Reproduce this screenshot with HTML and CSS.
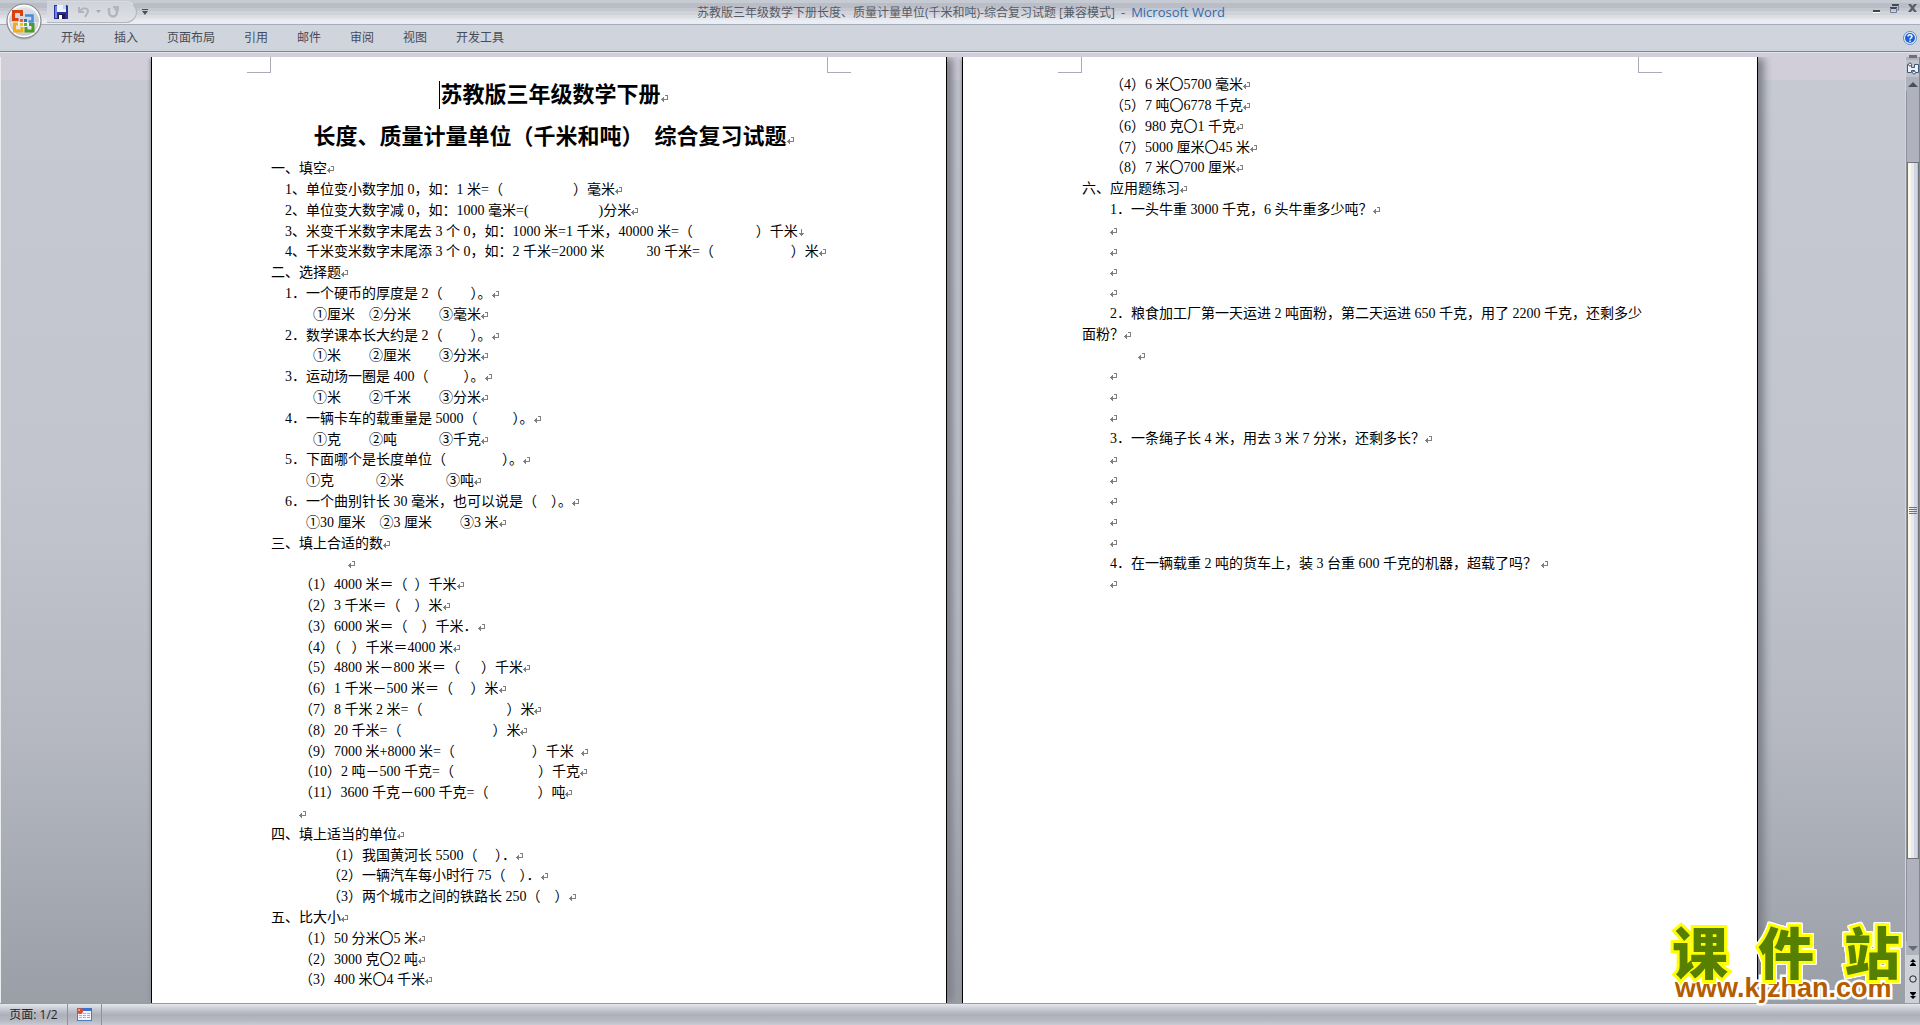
FILE: index.html
```html
<!DOCTYPE html>
<html lang="zh-CN">
<head>
<meta charset="utf-8">
<title>苏教版三年级数学下册 - Microsoft Word</title>
<link rel="stylesheet" href="styles.css">
</head>
<body>
<header class="titlebar">
  <button class="office" aria-label="Office 按钮">
    <svg width="40" height="40" viewBox="0 0 40 40">
      <defs>
        <radialGradient id="orb" cx="50%" cy="40%" r="60%"><stop offset="0" stop-color="#fff"/><stop offset=".6" stop-color="#e4e6ea"/><stop offset="1" stop-color="#b4b8c0"/></radialGradient>
        <linearGradient id="orbTop" x1="0" y1="0" x2="0" y2="1"><stop offset="0" stop-color="#d4d7dc"/><stop offset="1" stop-color="#c2c5cb"/></linearGradient>
      </defs>
      <circle cx="20" cy="20" r="17.500" fill="#8e9299" opacity=".5"/>
      <circle cx="20" cy="19" r="17" fill="url(#orb)" stroke="#7d8189"/>
      <circle cx="20" cy="19" r="15.500" fill="none" stroke="#fff" stroke-width="1.500"/>
      <path d="M5 20a15 14 0 0 1 30 0z" fill="url(#orbTop)" opacity=".7"/>
      <g fill="none" stroke-width="3">
        <path d="M18 9.500h-8.500v8h5M17.500 8v6" stroke="#d8420f"/>
        <path d="M21 13.500h7.500v6h-4" stroke="#3f8fdc" stroke-width="2.500"/>
        <path d="M14 22h-3.500v7h7.500V25" stroke="#f5ac14"/>
        <path d="M25 22.500h4v6.500h-7V25" stroke="#4c9a2a"/>
      </g>
      <path d="M16 17h3v3h-3z" fill="#e8661c"/><path d="M20 17h3v3h-3z" fill="#2a6fd0"/>
      <path d="M16 21h3v3h-3z" fill="#f2c21c"/><path d="M20 21h3v3h-3z" fill="#61ad35"/>
    </svg>
  </button>
  <div class="qat">
    <button aria-label="保存"><svg width="14" height="14" viewBox="0 0 14 14"><path d="M0 0h13l1 1v13H0z" fill="#2c2f9c"/><path d="M1 1h2v12H1z" fill="#6f86e6"/><path d="M3 0h9v7H3z" fill="#e9f2ff"/><path d="M9 0h3v4H9z" fill="#b4d4fa"/><path d="M4 9h7v5H4z" fill="#1b1c4c"/><path d="M5 10h3v4H5z" fill="#fff"/></svg></button>
    <button aria-label="撤消"><svg width="12" height="12" viewBox="0 0 12 12" fill="none" stroke="#b1b5bf" stroke-width="2"><path d="M1 1v5h5M2 5c3-4 8-3 8 0 0 2-2 4-3 6"/></svg></button>
    <button class="drop" aria-label="撤消选项"><svg width="5" height="4" viewBox="0 0 5 4"><path d="M0 0h5L2.500 3z" fill="#a6aab5"/></svg></button>
    <button aria-label="重复"><svg width="12" height="12" viewBox="0 0 12 12" fill="none" stroke="#b1b5bf" stroke-width="2.500"><path d="M2 2v4c0 6 8 6 8 0 0-2-1-3-2-4M6 1h5v4"/></svg></button>
  </div>
  <button class="customize" aria-label="自定义快速访问工具栏"><svg width="6" height="6" viewBox="0 0 6 6"><path d="M0 0h6v1H0zM0 2h6L3 6z" fill="#4b4f58"/></svg></button>
  <h1 class="caption">苏教版三年级数学下册长度、质量计量单位(千米和吨)-综合复习试题 [兼容模式]<span class="dash">-</span><span>Microsoft Word</span></h1>
  <div class="window-buttons">
    <button aria-label="最小化"><svg width="9" height="9" viewBox="0 0 9 9"><path d="M1 6h7v2H1z" fill="#3f434b"/><path d="M1 8h7v1H1z" fill="#fff"/></svg></button>
    <button aria-label="还原"><svg width="9" height="9" viewBox="0 0 9 9" fill="none"><path d="M2 1h7M0 4h7" stroke="#43474f" stroke-width="2"/><path d="M8.500 1v5H7M.500 4v4.500h6V4" stroke="#6f7f9a"/></svg></button>
    <button aria-label="关闭"><svg width="9" height="9" viewBox="0 0 9 9"><path d="M0 0h3l1.500 2L6 0h3L6 4l3 4H6L4.500 6 3 8H0l3-4z" fill="#59606d"/></svg></button>
  </div>
</header>

<nav class="tabs">
  <button>开始</button><button>插入</button><button>页面布局</button><button>引用</button><button>邮件</button><button>审阅</button><button>视图</button><button>开发工具</button>
  <button class="help" aria-label="帮助"><svg width="14" height="14" viewBox="0 0 14 14"><circle cx="7" cy="7" r="6.500" fill="#eaf3fd" stroke="#5d8fc4"/><circle cx="7" cy="7" r="5" fill="#1f5fd6"/><path d="M5 5.500c0-2.500 4-2.500 4 0C9 7 7 6.800 7 8.500M7 9.500v1.500" fill="none" stroke="#fff" stroke-width="1.500"/></svg></button>
</nav>

<div class="workspace">
  <main class="canvas">
    <article class="paper">
      <div class="crop"></div>
      <h2 class="heading"><i class="caret"></i>苏教版三年级数学下册</h2>
      <h2 class="heading">长度、质量计量单位（千米和吨）<span class="gap"></span>综合复习试题</h2>
      <div class="lines">
        <p>一、填空</p>
        <p class="in1">1、单位变小数字加 0，如：1 米=（　　　　　）毫米</p>
        <p class="in1">2、单位变大数字减 0，如：1000 毫米=(　　　　　)分米</p>
        <p class="in1 soft">3、米变千米数字末尾去 3 个 0，如：1000 米=1 千米，40000 米=（　　　　  ）千米</p>
        <p class="in1">4、千米变米数字末尾添 3 个 0，如：2 千米=2000 米　　　30 千米=（　　　　　  ）米</p>
        <p>二、选择题</p>
        <p class="in1">1．一个硬币的厚度是 2（　　）。</p>
        <p class="in3">①厘米　②分米　　③毫米</p>
        <p class="in1">2．数学课本长大约是 2（　　）。</p>
        <p class="in3">①米　　②厘米　　③分米</p>
        <p class="in1">3．运动场一圈是 400（　　  ）。</p>
        <p class="in3">①米　　②千米　　③分米</p>
        <p class="in1">4．一辆卡车的载重量是 5000（　　  ）。</p>
        <p class="in3">①克　　②吨　　　③千克</p>
        <p class="in1">5．下面哪个是长度单位（　　　　）。</p>
        <p class="in2-half">①克　　　②米　　　③吨</p>
        <p class="in1">6．一个曲别针长 30 毫米，也可以说是（　）。</p>
        <p class="in2-half">①30 厘米　②3 厘米　　③3 米</p>
        <p>三、填上合适的数</p>
        <p class="in5"></p>
        <p class="in2">（1）4000 米＝（  ）千米</p>
        <p class="in2">（2）3 千米＝（　）米</p>
        <p class="in2">（3）6000 米＝（　）千米．</p>
        <p class="in2">（4）（   ）千米＝4000 米</p>
        <p class="in2">（5）4800 米－800 米＝（　  ）千米</p>
        <p class="in2">（6）1 千米－500 米＝（　 ）米</p>
        <p class="in2">（7）8 千米 2 米=（　　　　　　）米</p>
        <p class="in2">（8）20 千米=（　　　　　　  ）米</p>
        <p class="in2">（9）7000 米+8000 米=（　　　　　  ）千米  </p>
        <p class="in2">（10）2 吨－500 千克=（　　　　　　）千克</p>
        <p class="in2">（11）3600 千克－600 千克=（　　　  ）吨</p>
        <p class="in2"></p>
        <p>四、填上适当的单位</p>
        <p class="in4">（1）我国黄河长 5500（　 ）．</p>
        <p class="in4">（2）一辆汽车每小时行 75（　）．</p>
        <p class="in4">（3）两个城市之间的铁路长 250（　）</p>
        <p>五、比大小</p>
        <p class="in2">（1）50 分米〇5 米</p>
        <p class="in2">（2）3000 克〇2 吨</p>
        <p class="in2">（3）400 米〇4 千米</p>
      </div>
    </article>
    <article class="paper">
      <div class="crop"></div>
      <div class="lines">
        <p class="in2">（4）6 米〇5700 毫米</p>
        <p class="in2">（5）7 吨〇6778 千克</p>
        <p class="in2">（6）980 克〇1 千克</p>
        <p class="in2">（7）5000 厘米〇45 米</p>
        <p class="in2">（8）7 米〇700 厘米</p>
        <p>六、应用题练习</p>
        <p class="in2">1．一头牛重 3000 千克，6 头牛重多少吨？</p>
        <p class="in2"></p>
        <p class="in2"></p>
        <p class="in2"></p>
        <p class="in2"></p>
        <p class="in2 wrap">2．粮食加工厂第一天运进 2 吨面粉，第二天运进 650 千克，用了 2200 千克，还剩多少</p>
        <p>面粉？</p>
        <p class="in4"></p>
        <p class="in2"></p>
        <p class="in2"></p>
        <p class="in2"></p>
        <p class="in2">3．一条绳子长 4 米，用去 3 米 7 分米，还剩多长？</p>
        <p class="in2"></p>
        <p class="in2"></p>
        <p class="in2"></p>
        <p class="in2"></p>
        <p class="in2"></p>
        <p class="in2">4．在一辆载重 2 吨的货车上，装 3 台重 600 千克的机器，超载了吗？ </p>
        <p class="in2"></p>
      </div>
    </article>
  </main>
  <aside class="scrollbar">
    <div class="split"></div>
    <button class="ruler" aria-label="标尺"><svg width="13" height="13" viewBox="0 0 13 13" fill="#f1eff6" stroke="#41597a"><path d="M1.500 2.500h4v3h3v-3h4v8h-4v-2h-3v2h-4z"/><circle cx="4" cy="2.500" r="1.500"/><circle cx="8" cy="10.500" r="1.500"/></svg></button>
    <button class="arrow" aria-label="向上滚动"><svg width="10" height="5" viewBox="0 0 10 5"><path d="M5 0l5 5H0z" fill="#4a505c"/></svg></button>
    <div class="track"><div class="thumb"><i></i><i></i><i></i><i></i></div></div>
    <button class="arrow" aria-label="向下滚动"><svg width="10" height="5" viewBox="0 0 10 5"><path d="M0 0h10L5 5z" fill="#656b76"/></svg></button>
    <div class="browse">
      <button aria-label="前一页"><svg width="6" height="7" viewBox="0 0 6 7"><path d="M3 0l3 3H0zM3 3l3 3H0zM0 6h6v1H0z"/></svg></button>
      <button aria-label="选择浏览对象"><svg width="8" height="8" viewBox="0 0 8 8"><circle cx="4" cy="4" r="3.200" fill="#d5d8de" stroke="#222"/></svg></button>
      <button aria-label="下一页"><svg width="6" height="7" viewBox="0 0 6 7"><path d="M0 0h6v1H0zM0 1h6L3 4zM0 4h6L3 7z"/></svg></button>
    </div>
  </aside>
  <a class="watermark" href="#"><span class="brand"><b>课</b><b>件</b><b>站</b></span><span class="site">www.kjzhan.com</span></a>
</div>

<footer class="status">
  <button class="pages">页面: 1/2</button>
  <button class="macro" aria-label="录制宏"><svg width="15" height="13" viewBox="0 0 15 13"><path d="M0 0h15v13H0z" fill="#5379b8"/><path d="M1 3h13v9H1z" fill="#f3f7fd"/><path d="M2 5h3v1H2zm4 0h3v1H6zm4 0h3v1h-3zM2 7h3v1H2zm4 0h3v1H6zm4 0h3v1h-3zM2 9h3v1H2zm4 0h3v1H6zm4 0h3v1h-3z" fill="#9db3d8"/><path d="M5 0h10v3H5z" fill="#3f6fd0"/><circle cx="3" cy="3" r="3" fill="#d84e2a"/><circle cx="2" cy="2" r="1" fill="#f7b49c"/></svg></button>
</footer>
</body>
</html>
```
FILE: styles.css
```css
* { box-sizing: border-box; }

body {
  margin: 0;
  height: 100vh;
  display: flex;
  flex-direction: column;
  overflow: hidden;
  font: 12px/16px "Open Sans", "Noto Sans CJK SC", sans-serif;
  color: #3f4450;
  background: #c6c9d2;
}

button {
  margin: 0;
  padding: 0;
  border: 0;
  background: none;
  font: inherit;
  color: inherit;
  display: flex;
  align-items: center;
  justify-content: center;
}

svg { display: block; }

/* title bar */
.titlebar {
  position: relative;
  flex: none;
  height: 25px;
  display: flex;
  align-items: center;
  padding: 0 3px 0 47px;
  border-bottom: 1px solid #a9adb8;
  background: linear-gradient(#c6cad3 0 3px, #babdc6 3px 8px, #c4c7cf 8px 11px, #cfd2d9 11px 15px, #dcdde2 15px 18px, #e6e7eb 18px 20px, #e9edf5 20px);
}

.office {
  position: absolute;
  left: 4px;
  top: 2px;
  z-index: 2;
}

.qat {
  display: flex;
  align-items: center;
  gap: 6px;
  width: 90px;
  height: 22px;
  padding-left: 7px;
  border: 1px solid #b2b6c0;
  border-left: 0;
  border-top-color: #d9dce3;
  border-radius: 0 11px 11px 0;
  background: linear-gradient(#cfd2d9, #dfe1e6);
}

.qat button:nth-child(2) { margin-left: 4px; }

.customize { margin-left: 5px; }

.caption {
  flex: 1;
  margin: 0;
  padding-right: 98px;
  text-align: center;
  font-size: 12px;
  line-height: 16px;
  font-weight: 400;
  color: #565b66;
  white-space: nowrap;
}

.caption span {
  font-size: 13px;
  color: #2f6cae;
}

.caption .dash { margin: 0 6px; }

.window-buttons {
  display: flex;
  gap: 9px;
  align-self: flex-start;
  padding-top: 4px;
}

/* ribbon tabs */
.tabs {
  flex: none;
  display: flex;
  align-items: center;
  gap: 1px;
  height: 32px;
  padding: 0 3px 2px 47px;
  color: #454b59;
  border-bottom: 4px solid #d1ced9;
  background: linear-gradient(#d0d4dd 26px, #7f8691 26px 27px, #dfe6eb 27px);
}

.tabs button { padding: 0 14px; }

.tabs .help {
  margin-left: auto;
  padding: 0;
}

/* document area */
.workspace {
  position: relative;
  flex: 1;
  min-height: 0;
  display: flex;
}

.canvas {
  flex: 1;
  min-width: 0;
  display: flex;
  justify-content: center;
  gap: 15px;
  padding-left: 3px;
  overflow: hidden;
  border-left: 1px solid #e9ebef;
  background: linear-gradient(#d1ced9 23px, #c6c9d2 23px, #c2c5ce 45%, #b5b8c0 72%, #9a9ea6);
}

.paper {
  flex: 0 1 796px;
  min-width: 0;
  padding: 17px 119px 0;
  background: #fff;
  border: solid #000;
  border-width: 0 1px;
  box-shadow: 7px 0 8px -1px #7c7f88, -3px 0 3px -2px #8d9099;
  clip-path: inset(0 -14px 0 -6px);
}

.crop {
  height: 16px;
  margin: -17px -24px 1px;
  background:
    linear-gradient(#a9abb8, #a9abb8) 0 100% / 24px 1px,
    linear-gradient(#a9abb8, #a9abb8) 23px 0 / 1px 100%,
    linear-gradient(#a9abb8, #a9abb8) 100% 100% / 24px 1px,
    linear-gradient(#a9abb8, #a9abb8) calc(100% - 23px) 0 / 1px 100%;
  background-repeat: no-repeat;
}

.heading {
  display: flex;
  justify-content: center;
  align-items: center;
  margin: 0;
  padding-left: 9px;
  font: 700 22px/42px "Liberation Serif", "Noto Sans CJK SC", sans-serif;
  color: #000;
  white-space: nowrap;
}

.heading .gap { width: 11px; }

.caret {
  width: 1px;
  height: 28px;
  background: #000;
}

.lines {
  font: 14px/21px "Liberation Serif", "Noto Sans CJK SC", sans-serif;
  color: #000;
  text-autospace: no-autospace;
}

.lines p {
  margin: 0;
  height: 21px;
  white-space: pre;
}

/* every fifth line is one pixel shorter, giving a 15.6pt pitch at this zoom */
.lines p:nth-child(5n) {
  height: 20px;
  line-height: 20px;
}

.in1 { padding-left: 14px; }
.in2 { padding-left: 28px; }
.in2-half { padding-left: 35px; }
.in3 { padding-left: 42px; }
.in4 { padding-left: 56px; }
.in5 { padding-left: 77px; }

/* paragraph marks */
.lines p::after,
.heading::after {
  content: "";
  display: inline-block;
  width: 7px;
  height: 7px;
  background: url("data:image/svg+xml,%3Csvg xmlns='http://www.w3.org/2000/svg' width='7' height='7'%3E%3Cpath d='M4 0h3v5H3v2H2V6H1V5H0V4h1V3h1V2h1v2h3V1H4z' fill='%23808080'/%3E%3C/svg%3E") no-repeat;
}

.heading::after { margin-top: 7px; }

.lines .soft::after {
  background-image: url("data:image/svg+xml,%3Csvg xmlns='http://www.w3.org/2000/svg' width='7' height='7'%3E%3Cpath d='M3 0h1v4h2v1H5v1H4v1H3V6H2V5H1V4h2z' fill='%23808080'/%3E%3C/svg%3E");
}

.lines .wrap::after { content: none; }

/* vertical scrollbar */
.scrollbar {
  flex: none;
  width: 15px;
  display: flex;
  flex-direction: column;
  border-right: 1px solid #83868e;
  border-left: 1px solid #d3d5db;
  background: #afb2bc;
}

.split {
  width: 8px;
  height: 3px;
  margin: -2px auto 2px;
  background: #6c6f76;
}

.ruler {
  height: 17px;
  background: #c0c4cd;
}

.arrow { height: 14px; }

.track {
  flex: 1;
  padding: 71px 0 82px;
  border-left: 1px solid #8f929b;
}

.thumb {
  height: 100%;
  display: flex;
  flex-direction: column;
  align-items: center;
  justify-content: center;
  gap: 1px;
  border: 1px solid #6f727a;
  background: linear-gradient(90deg, #fbf8ea 3px, #e6eaf5 3px 6px, #d2d6e0 6px 9px, #c0c4cd 9px);
}

.thumb i {
  width: 8px;
  height: 1px;
  background: #6f727a;
}

.browse {
  display: flex;
  flex-direction: column;
  align-items: center;
  justify-content: space-around;
  height: 48px;
  background: #cdd0d7;
}

/* site mark over the page corner */
.watermark {
  position: absolute;
  right: 20px;
  bottom: 0;
  width: 228px;
  text-decoration: none;
}

.brand {
  display: flex;
  justify-content: space-between;
  font: 900 56px/46px "Noto Sans CJK SC", sans-serif;
  color: #588000;
  -webkit-text-stroke: 6px #ff0;
  paint-order: stroke fill;
  filter: drop-shadow(1px 0 0 #fff) drop-shadow(-1px 0 0 #fff) drop-shadow(0 1px 0 #fff) drop-shadow(0 -1px 0 #fff);
}

.site {
  display: block;
  padding-left: 3px;
  font: 700 27px/30px "Liberation Sans", sans-serif;
  color: #b35c00;
  -webkit-text-stroke: 5px #fff;
  paint-order: stroke fill;
}

/* status bar */
.status {
  flex: none;
  display: flex;
  height: 22px;
  color: #22252c;
  border-top: 1px solid #989ba4;
  background: linear-gradient(#e4e6ec, #c8cbd3 5px, #b9bcc5 8px, #adb0b9 11px, #b8bbc4 17px, #c9ccd4);
}

.status button { border-right: 1px solid #8e919a; }
.pages { width: 68px; }
.macro { width: 34px; }
```
